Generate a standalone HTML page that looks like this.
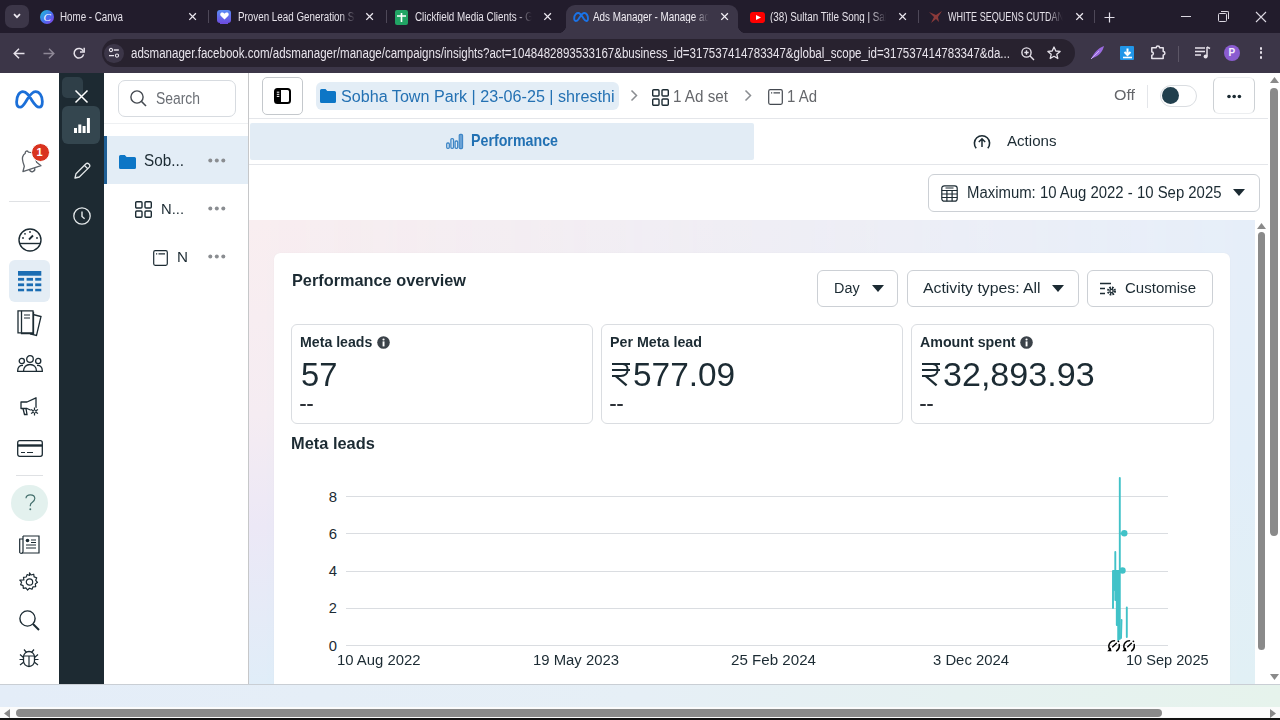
<!DOCTYPE html>
<html><head><meta charset="utf-8">
<style>
*{box-sizing:border-box;margin:0;padding:0}
html,body{width:1280px;height:720px;overflow:hidden;background:#fff;font-family:"Liberation Sans",sans-serif}
.a{position:absolute}
.t{position:absolute;white-space:nowrap;line-height:1;transform-origin:0 0}
.b{font-weight:bold}
svg{position:absolute;overflow:visible}
#tabs{left:0;top:0;width:1280px;height:33px;background:#221c2c}
#tb{left:0;top:33px;width:1280px;height:40px;background:#3c3648}
.tt{color:#e6e2ea;font-size:12px;top:10.8px}
.sep{position:absolute;top:10px;width:1px;height:13px;background:#4e4858}
.fade{-webkit-mask-image:linear-gradient(90deg,#000 86%,transparent 99%)}
</style></head><body>

<!-- ============ TAB STRIP ============ -->
<div id="tabs" class="a">
  <div class="a" style="left:5px;top:5px;width:24px;height:23px;border-radius:7px;background:#3c3648"></div>
  <svg style="left:12px;top:12px" width="10" height="8" viewBox="0 0 10 8"><path d="M2 2.2l3 3 3-3" stroke="#ece8f0" stroke-width="1.7" fill="none"></path></svg>

  <!-- tab1 canva -->
  <div class="a" style="left:40px;top:10px;width:14px;height:14px;border-radius:50%;background:linear-gradient(135deg,#19c6d4 0%,#4a6cf0 55%,#8b3ee6 100%)"></div>
  <div class="t" style="left:43.5px;top:11.5px;font-size:11px;color:#fff;font-style:italic;font-family:'Liberation Serif',serif">C</div>
  <div class="t tt f" style="left: 60px; --w: 63px; transform: scaleX(0.8142);">Home - Canva</div>
  <svg style="left:188.7px;top:13.4px" width="7.2" height="7.2"><path d="M0.3 0.3l6.6 6.6M6.9 0.3l-6.6 6.6" stroke="#ece8f0" stroke-width="1.3"></path></svg>
  <div class="sep" style="left:208px"></div>

  <!-- tab2 -->
  <div class="a" style="left:217px;top:9.5px;width:14px;height:13px;border-radius:3px;background:linear-gradient(180deg,#5a8cf5,#6d4fe0)"></div>
  <svg style="left:219.5px;top:12px" width="9" height="8" viewBox="0 0 10 9"><path d="M5 8.5L1 4.5C-0.5 3 0.3 0.5 2.5 0.5 3.7 0.5 4.5 1.3 5 2 5.5 1.3 6.3 0.5 7.5 0.5 9.7 0.5 10.5 3 9 4.5Z" fill="#fff"></path></svg>
  <div class="a" style="left:220px;top:22px;width:8px;height:2px;background:#6d4fe0"></div>
  <div class="t tt f fade" style="left: 237.5px; --w: 119px; transform: scaleX(0.8182);">Proven Lead Generation St</div>
  <svg style="left:366.2px;top:13.4px" width="7.2" height="7.2"><path d="M0.3 0.3l6.6 6.6M6.9 0.3l-6.6 6.6" stroke="#ece8f0" stroke-width="1.3"></path></svg>
  <div class="sep" style="left:386px"></div>

  <!-- tab3 sheets -->
  <div class="a" style="left:395px;top:9.5px;width:13px;height:15px;border-radius:2px;background:#21a464"></div>
  <div class="a" style="left:398px;top:14px;width:7px;height:7px;border:1.3px solid #fff;border-width:0"></div>
  <svg style="left:397px;top:13px" width="9" height="9"><path d="M0 3h9M4.5 0v9" stroke="#fff" stroke-width="1.6"></path></svg>
  <div class="t tt f fade" style="left: 415px; --w: 118px; transform: scaleX(0.8192);">Clickfield Media Clients - G</div>
  <svg style="left:544.0px;top:13.4px" width="7.2" height="7.2"><path d="M0.3 0.3l6.6 6.6M6.9 0.3l-6.6 6.6" stroke="#ece8f0" stroke-width="1.3"></path></svg>

  <!-- active tab -->
  <div class="a" style="left:566px;top:5px;width:172px;height:29px;border-radius:9px 9px 0 0;background:#3c3648"></div>
  <div class="a" style="left:558px;top:25px;width:8px;height:8px;background:radial-gradient(circle at 0 0,transparent 8px,#3c3648 8.5px)"></div>
  <div class="a" style="left:738px;top:25px;width:8px;height:8px;background:radial-gradient(circle at 100% 0,transparent 8px,#3c3648 8.5px)"></div>
  <svg style="left:573px;top:12px" width="16" height="10" viewBox="0 0 16 10"><path d="M1.2 6.5C1.2 2 4 1 5.2 1 7.5 1 9.5 5 10.5 6.5 11.6 8.2 12.4 9 13.4 9 14.5 9 15 8 15 6.5 15 3.5 13.5 1 11.3 1 9 1 7 5 5.5 7.2 4.5 8.6 3.8 9 2.8 9 1.8 9 1.2 8 1.2 6.5Z" stroke="#1a73e8" stroke-width="1.9" fill="none"></path></svg>
  <div class="t tt f fade" style="left: 593px; --w: 117px; color: rgb(242, 239, 245); transform: scaleX(0.8234);">Ads Manager - Manage ad</div>
  <svg style="left:720.9px;top:13.4px" width="7.2" height="7.2"><path d="M0.3 0.3l6.6 6.6M6.9 0.3l-6.6 6.6" stroke="#f2eff5" stroke-width="1.3"></path></svg>

  <!-- tab5 youtube -->
  <div class="a" style="left:750px;top:11.5px;width:15px;height:11px;border-radius:3px;background:#f00"></div>
  <svg style="left:755.5px;top:14.5px" width="5" height="5"><path d="M0 0L5 2.5 0 5Z" fill="#fff"></path></svg>
  <div class="t tt f fade" style="left: 770px; --w: 117px; transform: scaleX(0.8209);">(38) Sultan Title Song | Sal</div>
  <svg style="left:898.7px;top:13.4px" width="7.2" height="7.2"><path d="M0.3 0.3l6.6 6.6M6.9 0.3l-6.6 6.6" stroke="#ece8f0" stroke-width="1.3"></path></svg>
  <div class="sep" style="left:918px"></div>

  <!-- tab6 -->
  <svg style="left:928px;top:10px" width="15" height="14" viewBox="0 0 15 14"><path d="M1 2L6 7 3 13 8 9 11 12 10 7 14 1 8 5Z" fill="#8c3a3a"></path></svg>
  <div class="t tt f fade" style="left: 948px; --w: 116px; transform: scaleX(0.7532);">WHITE SEQUENS CUTDAN</div>
  <svg style="left:1075.9px;top:13.4px" width="7.2" height="7.2"><path d="M0.3 0.3l6.6 6.6M6.9 0.3l-6.6 6.6" stroke="#ece8f0" stroke-width="1.3"></path></svg>
  <div class="sep" style="left:1094px"></div>
  <svg style="left:1104px;top:12px" width="11" height="11"><path d="M5.5 0.5v10M0.5 5.5h10" stroke="#e2dee8" stroke-width="1.2"></path></svg>

  <!-- window controls -->
  <div class="a" style="left:1180.5px;top:15.5px;width:10px;height:1px;background:#dcd8e2"></div>
  <div class="a" style="left:1218px;top:13px;width:8.5px;height:8.5px;border:1px solid #dcd8e2;border-radius:1.5px"></div>
  <div class="a" style="left:1220.5px;top:10.5px;width:8.5px;height:8.5px;border-top:1px solid #dcd8e2;border-right:1px solid #dcd8e2;border-radius:0 2px 0 0"></div>
  <svg style="left:1256px;top:11.5px" width="10" height="10"><path d="M0 0l10 10M10 0L0 10" stroke="#dcd8e2" stroke-width="1.1"></path></svg>
</div>

<!-- ============ TOOLBAR ============ -->
<div id="tb" class="a">
  <svg style="left:13px;top:14.5px" width="12" height="11" viewBox="0 0 12 11"><path d="M11.5 5.5H1.2M6 0.7L1.2 5.5 6 10.3" stroke="#e6e2ea" stroke-width="1.5" fill="none"></path></svg>
  <svg style="left:43px;top:14.5px" width="12" height="11" viewBox="0 0 12 11"><path d="M0.5 5.5h10.3M6 0.7l4.8 4.8L6 10.3" stroke="#8e8896" stroke-width="1.5" fill="none"></path></svg>
  <svg style="left:73px;top:14px" width="12" height="12" viewBox="0 0 12 12"><path d="M10.3 4.2A4.8 4.8 0 1 0 10.6 7.4" stroke="#e6e2ea" stroke-width="1.5" fill="none"></path><path d="M11.2 0.8v4.2H7" stroke="#e6e2ea" stroke-width="1.5" fill="none"></path></svg>

  <div class="a" style="left:102px;top:6px;width:973px;height:27.5px;border-radius:14px;background:#28222f"></div>
  <div class="a" style="left:104px;top:10.5px;width:20px;height:19.5px;border-radius:50%;background:#3c3648"></div>
  <svg style="left:109px;top:15px" width="10" height="10" viewBox="0 0 10 10"><circle cx="2" cy="2" r="1.6" stroke="#e6e2ea" stroke-width="1.1" fill="none"></circle><path d="M4.8 2h5M0 7.6h5" stroke="#e6e2ea" stroke-width="1.3"></path><circle cx="8" cy="7.6" r="1.6" stroke="#e6e2ea" stroke-width="1.1" fill="none"></circle></svg>
  <div class="t f" style="left: 131.25px; top: 13px; font-size: 14.49px; color: rgb(232, 228, 236); --w: 879px; transform: scaleX(0.7964);">adsmanager.facebook.com/adsmanager/manage/campaigns/insights?act=1048482893533167&amp;business_id=317537414783347&amp;global_scope_id=317537414783347&amp;da...</div>
  <!-- zoom -->
  <svg style="left:1021px;top:14px" width="14" height="14" viewBox="0 0 14 14"><circle cx="5.5" cy="5.5" r="4.6" stroke="#e6e2ea" stroke-width="1.4" fill="none"></circle><path d="M8.8 8.8L13 13M3.3 5.5h4.4M5.5 3.3v4.4" stroke="#e6e2ea" stroke-width="1.4"></path></svg>
  <!-- star -->
  <svg style="left:1047px;top:13px" width="14" height="14" viewBox="0 0 14 14"><path d="M7 1l1.8 4 4.3.4-3.3 2.9 1 4.2L7 10.3 3.2 12.5l1-4.2L.9 5.4l4.3-.4Z" stroke="#e6e2ea" stroke-width="1.3" fill="none" stroke-linejoin="round"></path></svg>
  <!-- feather ext -->
  <svg style="left:1090px;top:12px" width="15" height="15" viewBox="0 0 15 15"><path d="M1 14C4 8 8 3 14 1 13 6 9 11 3 13Z" fill="#9b6be0"></path><path d="M1 14L9 6" stroke="#d9c2ff" stroke-width="0.8"></path></svg>
  <!-- download ext -->
  <div class="a" style="left:1119.8px;top:13px;width:14.2px;height:14px;background:#2196e8;border-radius:1px"></div>
  <svg style="left:1120.6px;top:13.5px" width="13" height="13" viewBox="0 0 13 13"><path d="M6.5 1.5v6M3.5 5l3 3 3-3" stroke="#fff" stroke-width="2" fill="none"></path><path d="M2 10.5h9" stroke="#fff" stroke-width="1.6"></path></svg>
  <!-- puzzle -->
  <svg style="left:1151px;top:12.3px" width="15" height="15" viewBox="0 0 15 15"><path d="M0.8 2.8H5.2A1.7 1.7 0 0 1 8.6 2.8H12.2V6.6A1.7 1.7 0 0 1 12.2 10V13.6H0.8V10.2A1.6 1.6 0 0 0 0.8 7Z" stroke="#e6e2ea" stroke-width="1.5" fill="none" stroke-linejoin="round"></path></svg>
  <div class="a" style="left:1178px;top:13px;width:1px;height:16px;background:#5c5666"></div>
  <!-- media -->
  <svg style="left:1195px;top:13px" width="16" height="14" viewBox="0 0 16 14"><path d="M0 2h10M0 5.5h10M0 9h6" stroke="#e6e2ea" stroke-width="1.5"></path><path d="M12 1v9.5" stroke="#e6e2ea" stroke-width="1.5"></path><circle cx="10.6" cy="10.6" r="2" fill="#e6e2ea"></circle><path d="M12 1l3 1.5" stroke="#e6e2ea" stroke-width="1.5"></path></svg>
  <!-- profile -->
  <div class="a" style="left:1223.8px;top:11.6px;width:16.5px;height:16.5px;border-radius:50%;background:#8a5cd0"></div>
  <div class="t b" style="left:1228.4px;top:15.2px;font-size:10px;color:#f4eefc">P</div>
  <!-- kebab -->
  <div class="a" style="left:1259.6px;top:13.9px;width:2.8px;height:2.8px;border-radius:50%;background:#e6e2ea"></div>
  <div class="a" style="left:1259.6px;top:18.4px;width:2.8px;height:2.8px;border-radius:50%;background:#e6e2ea"></div>
  <div class="a" style="left:1259.6px;top:22.8px;width:2.8px;height:2.8px;border-radius:50%;background:#e6e2ea"></div>
</div>

<!-- ============ PAGE ============ -->
<div class="a" style="left:0;top:73px;width:1280px;height:611px;background:#fff"></div>

<!-- left nav -->
<svg style="left:0;top:0" width="60" height="120" viewBox="0 0 60 120"><path d="M16.6 101.9C16.6 96 19.5 91.65 22.9 91.65 26.5 91.65 29 95.5 32 100.5 34.5 104.5 36.5 107.2 39.2 107.2 41.2 107.2 42.35 105 42.35 101.5 42.35 96 39.5 91.65 35.4 91.65 32 91.65 29.5 95.5 26.5 100.5 24 104.5 22.5 107.2 20.4 107.2 18 107.2 16.6 105 16.6 101.9Z" stroke="#1b6fd8" stroke-width="2.8" fill="none"></path></svg>
<!-- bell -->
<svg style="left:18px;top:149px;transform:rotate(-18deg);transform-origin:12px 14px" width="24" height="26" viewBox="0 0 24 26"><path d="M10.6 3.2a1.6 1.6 0 0 1 3.2 0C17.3 4.3 18.6 7.5 18.6 11v4.3l3 4.7H2.6l3-4.7V11C5.6 7.5 7 4.3 10.6 3.2Z" stroke="#5b6168" stroke-width="1.3" fill="#fff" stroke-linejoin="round"></path><path d="M9.4 20.3a2.7 2.7 0 0 0 5.4 0" stroke="#5b6168" stroke-width="1.3" fill="none"></path></svg>
<div class="a" style="left:30.5px;top:142.5px;width:19px;height:19px;border-radius:50%;background:#d9331f;border:1.5px solid #fff"></div>
<div class="t b" style="left:36.5px;top:146.5px;font-size:11px;color:#fff">1</div>
<div class="a" style="left:9px;top:201px;width:41px;height:1px;background:#dfe1e4"></div>
<!-- gauge -->
<svg style="left:18px;top:227.5px" width="24" height="24" viewBox="0 0 24 24"><circle cx="12" cy="12" r="11" stroke="#1c2b33" stroke-width="1.4" fill="none"></circle><path d="M1.5 15.5h21" stroke="#1c2b33" stroke-width="1.4"></path><path d="M11 11.5l4-4" stroke="#1c2b33" stroke-width="1.8"></path><circle cx="5" cy="10" r=".9" fill="#1c2b33"></circle><circle cx="7" cy="5.8" r=".9" fill="#1c2b33"></circle><circle cx="12" cy="4" r=".9" fill="#1c2b33"></circle><circle cx="19" cy="10" r=".9" fill="#1c2b33"></circle></svg>
<!-- table selected -->
<div class="a" style="left:9px;top:260px;width:41px;height:42px;border-radius:6px;background:#e4edf5"></div>
<svg style="left:17.8px;top:270.9px" width="24" height="21" viewBox="0 0 24 21"><rect x="0" y="0" width="23.3" height="4.7" fill="#1b6db3"></rect><g fill="#1b6db3"><rect x="0" y="6.9" width="6.1" height="2.8"></rect><rect x="8.6" y="6.9" width="6.4" height="2.8"></rect><rect x="17.2" y="6.9" width="6.1" height="2.8"></rect><rect x="0" y="12.4" width="6.1" height="2.8"></rect><rect x="8.6" y="12.4" width="6.4" height="2.8"></rect><rect x="17.2" y="12.4" width="6.1" height="2.8"></rect><rect x="0" y="17.8" width="6.1" height="2.5"></rect><rect x="8.6" y="17.8" width="6.4" height="2.5"></rect><rect x="17.2" y="17.8" width="6.1" height="2.5"></rect></g></svg>
<!-- pages -->
<svg style="left:16.5px;top:309.5px" width="26" height="27" viewBox="0 0 26 27"><path d="M4.5 2.5h12v21h-12Z" stroke="#1c2b33" stroke-width="1.3" fill="#fff"></path><path d="M1 .8h15v22H1Z" stroke="#1c2b33" stroke-width="1.3" fill="#fff"></path><path d="M4.5 .8V22.8" stroke="#1c2b33" stroke-width="1.3"></path><path d="M7 5h6M7 8h6" stroke="#1c2b33" stroke-width="1.2"></path><path d="M16 4.5l8 2-4.5 19-6.5-1.7" stroke="#1c2b33" stroke-width="1.3" fill="none"></path></svg>
<!-- audience -->
<svg style="left:16.5px;top:355px" width="26" height="17" viewBox="0 0 26 17"><circle cx="13" cy="4" r="3.3" stroke="#1c2b33" stroke-width="1.3" fill="none"></circle><circle cx="4.8" cy="6" r="2.6" stroke="#1c2b33" stroke-width="1.3" fill="none"></circle><circle cx="21.2" cy="6" r="2.6" stroke="#1c2b33" stroke-width="1.3" fill="none"></circle><path d="M6.5 16.3c0-4.3 2.8-6.8 6.5-6.8s6.5 2.5 6.5 6.8Z" stroke="#1c2b33" stroke-width="1.3" fill="none"></path><path d="M6 10.5C3 10.2.7 12 .7 15.5v.8h5.5M20 10.5c3-.3 5.3 1.5 5.3 5v.8h-5.5" stroke="#1c2b33" stroke-width="1.3" fill="none"></path></svg>
<!-- megaphone -->
<svg style="left:19.5px;top:396.5px" width="20" height="19" viewBox="0 0 20 19"><path d="M1 5h6l9-4.2V15.5L7 11.5H1Z" stroke="#1c2b33" stroke-width="1.3" fill="#fff" stroke-linejoin="round"></path><path d="M3 11.5l1.5 6h2.5L6 11.5" stroke="#1c2b33" stroke-width="1.3" fill="none"></path><circle cx="14.5" cy="14.5" r="4" fill="#fff"></circle><path d="M14.5 10.5v8M11 12.5l7 4M11 16.5l7-4" stroke="#1c2b33" stroke-width="1.2"></path><circle cx="14.5" cy="14.5" r="1.5" fill="#fff" stroke="#1c2b33" stroke-width="1"></circle></svg>
<!-- card -->
<svg style="left:16.5px;top:439.5px" width="26" height="17" viewBox="0 0 26 17"><rect x=".7" y=".7" width="24.6" height="15.6" rx="2" stroke="#1c2b33" stroke-width="1.3" fill="none"></rect><path d="M.7 5.5h24.6" stroke="#1c2b33" stroke-width="2.4"></path><path d="M4 12.5h4M10 12.5h6" stroke="#1c2b33" stroke-width="1.2"></path></svg>
<div class="a" style="left:16px;top:474.5px;width:27px;height:1px;background:#dfe1e4"></div>
<!-- help -->
<div class="a" style="left:11.3px;top:484.5px;width:36.5px;height:36.5px;border-radius:50%;background:#e3f1ee"></div>
<svg style="left:25px;top:494px" width="11" height="17" viewBox="0 0 11 17"><path d="M1 4.2C1 2.1 2.8.8 5.2.8 7.8.8 9.8 2.3 9.8 4.6 9.8 6.6 8.3 7.5 7 8.5 5.9 9.3 5.3 10 5.3 11.5V12.3" stroke="#45706d" stroke-width="1.2" fill="none"></path><circle cx="5.3" cy="15.3" r=".95" fill="#45706d"></circle></svg>
<!-- news -->
<svg style="left:19px;top:535px" width="21" height="19" viewBox="0 0 21 19"><path d="M4 1h16v17H3" stroke="#1c2b33" stroke-width="1.2" fill="none"></path><path d="M4 1v15.5a1.8 1.8 0 0 1-3.3 1V4h3.3" stroke="#1c2b33" stroke-width="1.2" fill="none"></path><circle cx="8.5" cy="5.5" r="1.8" fill="#1c2b33"></circle><path d="M7 10h10M7 13h10M12 5h5M12 7.5h5" stroke="#1c2b33" stroke-width="1.1"></path></svg>
<!-- gear -->
<svg style="left:19px;top:572px" width="21" height="20" viewBox="0 0 21 20"><path d="M10.5 .8l1.6 2.2 2.6-.8.4 2.7 2.6.9-1 2.5 1.8 2-2.2 1.6.4 2.7-2.7.2-1 2.5-2.5-1.1-2 1.8-1.6-2.2-2.6.5-.2-2.7-2.5-1 1-2.5-1.8-2L4.9 8 4.5 5.3l2.7-.3 1-2.5 2.4 1Z" stroke="#1c2b33" stroke-width="1.2" fill="none" stroke-linejoin="round"></path><circle cx="10.5" cy="10" r="3.2" stroke="#1c2b33" stroke-width="1.2" fill="none"></circle></svg>
<!-- search -->
<svg style="left:19px;top:610px" width="21" height="21" viewBox="0 0 21 21"><circle cx="8.5" cy="8.5" r="7.6" stroke="#1c2b33" stroke-width="1.4" fill="none"></circle><path d="M14 14l6 6" stroke="#1c2b33" stroke-width="2"></path></svg>
<!-- bug -->
<svg style="left:19px;top:648px" width="20" height="19" viewBox="0 0 20 19"><path d="M5 1.5l2.5 3M15 1.5l-2.5 3" stroke="#1c2b33" stroke-width="1.2"></path><path d="M4.5 9a5.5 5.5 0 0 1 11 0v4a5.5 5.5 0 0 1-11 0Z" stroke="#1c2b33" stroke-width="1.3" fill="none"></path><path d="M5 8h10M10 8v10.3M1 6.5l3.5 3M19 6.5l-3.5 3M1 17l3.5-2.8M19 17l-3.5-2.8M.5 11.5h4M19.5 11.5h-4" stroke="#1c2b33" stroke-width="1.2"></path></svg>

<!-- dark panel -->
<div class="a" style="left:59px;top:73px;width:45px;height:611px;background:#1d2a32"></div>
<div class="a" style="left:62px;top:77px;width:21px;height:21px;border-radius:5px;background:#2f3f48"></div>
<svg style="left:75px;top:89.5px" width="13" height="13"><path d="M.5 .5l12 12M12.5 .5l-12 12" stroke="#fff" stroke-width="1.5"></path></svg>
<div class="a" style="left:62px;top:106px;width:38px;height:37.5px;border-radius:6px;background:#34464f"></div>
<svg style="left:74px;top:117.5px" width="16" height="15" viewBox="0 0 16 15"><rect x="0" y="10" width="3" height="5" fill="#fff"></rect><rect x="4.3" y="6.5" width="3" height="8.5" fill="#fff"></rect><rect x="8.6" y="8" width="3" height="7" fill="#fff"></rect><rect x="12.9" y="0" width="3" height="15" fill="#fff"></rect></svg>
<svg style="left:73.5px;top:162.5px" width="17" height="16" viewBox="0 0 17 16"><path d="M1 15l1-4.3L12 .8a1.8 1.8 0 0 1 2.6 0l.7.7a1.8 1.8 0 0 1 0 2.6L5.3 14Z" stroke="#e4e8ea" stroke-width="1.3" fill="none" stroke-linejoin="round"></path><path d="M10.5 2.5l3.5 3.5" stroke="#e4e8ea" stroke-width="1.3"></path></svg>
<svg style="left:72.5px;top:207px" width="18" height="18" viewBox="0 0 18 18"><circle cx="9" cy="9" r="8.2" stroke="#e4e8ea" stroke-width="1.3" fill="none"></circle><path d="M9 4.5V9.5l2.6 2.2" stroke="#e4e8ea" stroke-width="1.4" fill="none"></path></svg>

<!-- tree panel -->
<div class="a" style="left:248px;top:73px;width:1px;height:611px;background:#c6c7c9"></div>
<div class="a" style="left:117.5px;top:79.5px;width:118.5px;height:37px;border:1px solid #d7dbe0;border-radius:7px"></div>
<svg style="left:129.5px;top:89.5px" width="17" height="17" viewBox="0 0 17 17"><circle cx="7" cy="7" r="6.1" stroke="#444950" stroke-width="1.4" fill="none"></circle><path d="M11.3 11.3L16 16" stroke="#444950" stroke-width="1.6"></path></svg>
<div class="t f" style="left: 155.5px; top: 90px; font-size: 17.1px; color: rgb(106, 110, 116); --w: 44px; transform: scaleX(0.8122);">Search</div>
<div class="a" style="left:104px;top:122.5px;width:144px;height:1px;background:#eef0f2"></div>
<div class="a" style="left:104px;top:136px;width:144px;height:48px;background:#e3edf6"></div>
<div class="a" style="left:104px;top:136px;width:2.5px;height:48px;background:#1f5f95"></div>
<svg style="left:119px;top:155px" width="17" height="14" viewBox="0 0 17 14"><path d="M0 1.5A1.5 1.5 0 0 1 1.5 0h4.3l1.8 2h7.9A1.5 1.5 0 0 1 17 3.5v9A1.5 1.5 0 0 1 15.5 14h-14A1.5 1.5 0 0 1 0 12.5Z" fill="#0d76c6"></path></svg>
<div class="t f" style="left: 144px; top: 153px; font-size: 15.8px; color: rgb(28, 43, 51); --w: 40px; transform: scaleX(0.969);">Sob...</div>
<svg style="left:207.5px;top:157.5px" width="18" height="5"><circle cx="2.3" cy="2.5" r="2" fill="#8a8d91"></circle><circle cx="8.8" cy="2.5" r="2" fill="#8a8d91"></circle><circle cx="15.3" cy="2.5" r="2" fill="#8a8d91"></circle></svg>
<svg style="left:135px;top:201px" width="17" height="17" viewBox="0 0 17 17"><g stroke="#1c2b33" stroke-width="1.4" fill="none"><rect x=".7" y=".7" width="6.3" height="6.3" rx="1"></rect><rect x="10" y=".7" width="6.3" height="6.3" rx="1"></rect><rect x=".7" y="10" width="6.3" height="6.3" rx="1"></rect><rect x="10" y="10" width="6.3" height="6.3" rx="1"></rect></g></svg>
<div class="t f" style="left: 161px; top: 201px; font-size: 15.51px; color: rgb(28, 43, 51); --w: 23px; transform: scaleX(0.9534);">N...</div>
<svg style="left:207.5px;top:205.5px" width="18" height="5"><circle cx="2.3" cy="2.5" r="2" fill="#8a8d91"></circle><circle cx="8.8" cy="2.5" r="2" fill="#8a8d91"></circle><circle cx="15.3" cy="2.5" r="2" fill="#8a8d91"></circle></svg>
<svg style="left:153px;top:250px" width="15" height="16" viewBox="0 0 15 16"><rect x=".7" y=".7" width="13.6" height="14.6" rx="1.5" stroke="#1c2b33" stroke-width="1.2" fill="none"></rect><path d="M3 3.8h1.2M5.5 3.8h6.5" stroke="#1c2b33" stroke-width="1.3"></path></svg>
<div class="t f" style="left: 177px; top: 250px; font-size: 14.78px; color: rgb(28, 43, 51); --w: 11px; transform: scaleX(1.0307);">N</div>
<svg style="left:207.5px;top:253.5px" width="18" height="5"><circle cx="2.3" cy="2.5" r="2" fill="#8a8d91"></circle><circle cx="8.8" cy="2.5" r="2" fill="#8a8d91"></circle><circle cx="15.3" cy="2.5" r="2" fill="#8a8d91"></circle></svg>

<!-- main header -->
<div class="a" style="left:261.5px;top:77.3px;width:41.5px;height:37.3px;border:1px solid #c4c8cc;border-radius:5px"></div>
<svg style="left:274px;top:88px" width="17" height="16" viewBox="0 0 17 16"><rect x="1" y="1" width="15" height="14" rx="2.5" stroke="#000" stroke-width="2" fill="none"></rect><path d="M1 3.5a2.5 2.5 0 0 1 2.5-2.5H7V15H3.5A2.5 2.5 0 0 1 1 12.5Z" fill="#000"></path><path d="M2.8 4.2h2.5M2.8 6.3h2.5M2.8 8.4h2.5" stroke="#fff" stroke-width="1"></path></svg>
<div class="a" style="left:315.5px;top:82px;width:303px;height:28px;border-radius:6px;background:#e3edf6"></div>
<svg style="left:320px;top:89px" width="16" height="14" viewBox="0 0 16 14"><path d="M0 1.5A1.5 1.5 0 0 1 1.5 0h4l1.8 2H14.5A1.5 1.5 0 0 1 16 3.5v9A1.5 1.5 0 0 1 14.5 14h-13A1.5 1.5 0 0 1 0 12.5Z" fill="#0d76c6"></path></svg>
<div class="t f" style="left: 341px; top: 88px; font-size: 17.03px; color: rgb(36, 113, 179); --w: 273.5px; transform: scaleX(0.948);">Sobha Town Park | 23-06-25 | shresthi</div>
<svg style="left:630px;top:89px" width="8" height="13"><path d="M1.5 1.5l5 5-5 5" stroke="#8a8d91" stroke-width="1.5" fill="none"></path></svg>
<svg style="left:652px;top:88.5px" width="17" height="17" viewBox="0 0 17 17"><g stroke="#1c2b33" stroke-width="1.4" fill="none"><rect x=".7" y=".7" width="6.3" height="6.3" rx="1"></rect><rect x="10" y=".7" width="6.3" height="6.3" rx="1"></rect><rect x=".7" y="10" width="6.3" height="6.3" rx="1"></rect><rect x="10" y="10" width="6.3" height="6.3" rx="1"></rect></g></svg>
<div class="t f" style="left: 673px; top: 89px; font-size: 15.65px; color: rgb(101, 103, 107); --w: 55px; transform: scaleX(0.9729);">1 Ad set</div>
<svg style="left:744px;top:89px" width="8" height="13"><path d="M1.5 1.5l5 5-5 5" stroke="#8a8d91" stroke-width="1.5" fill="none"></path></svg>
<svg style="left:767.5px;top:88.5px" width="15" height="16" viewBox="0 0 15 16"><rect x=".7" y=".7" width="13.6" height="14.6" rx="1.5" stroke="#444950" stroke-width="1.2" fill="none"></rect><path d="M3 3.8h1.2M5.5 3.8h6.5" stroke="#444950" stroke-width="1.3"></path></svg>
<div class="t f" style="left: 787px; top: 89px; font-size: 15.65px; color: rgb(101, 103, 107); --w: 30px; transform: scaleX(0.9581);">1 Ad</div>
<div class="t f" style="left: 1113.7px; top: 87px; font-size: 15.36px; color: rgb(101, 103, 107); --w: 21px; transform: scaleX(1.0386);">Off</div>
<div class="a" style="left:1147px;top:84.5px;width:1px;height:23px;background:#e4e6ea"></div>
<div class="a" style="left:1159.5px;top:85.3px;width:37.5px;height:21.5px;border-radius:11px;border:1px solid #dadde1;background:#fff"></div>
<div class="a" style="left:1161.8px;top:87.3px;width:17.2px;height:17.2px;border-radius:50%;background:#213f4d"></div>
<div class="a" style="left:1213px;top:77px;width:42px;height:37px;border:1px solid #eceef0;border-left-color:#cdd1d5;border-right-color:#cdd1d5;border-radius:6px"></div>
<svg style="left:1227px;top:93.5px" width="16" height="5"><circle cx="2" cy="2.5" r="1.8" fill="#1c2b33"></circle><circle cx="7.2" cy="2.5" r="1.8" fill="#1c2b33"></circle><circle cx="12.4" cy="2.5" r="1.8" fill="#1c2b33"></circle></svg>
<div class="a" style="left:249px;top:118px;width:1019px;height:1px;background:#e4e6ea"></div>

<!-- tabs row -->
<div class="a" style="left:250px;top:123px;width:504px;height:37px;border-radius:2px;background:#e2ecf5"></div>
<svg style="left:445.5px;top:133.5px" width="17" height="15" viewBox="0 0 17 15"><g fill="none" stroke="#3e86c6" stroke-width="1.3"><rect x=".7" y="9" width="2.6" height="5.3" rx="1"></rect><rect x="4.9" y="4.6" width="2.6" height="9.7" rx="1"></rect><rect x="9.1" y="7" width="2.6" height="7.3" rx="1"></rect></g><rect x="13.2" y=".4" width="3.4" height="14.2" rx="1.2" fill="#6aa2d6" stroke="#3e86c6" stroke-width="1.1"></rect></svg>
<div class="t b f" style="left: 470.6px; top: 133px; font-size: 15.58px; color: rgb(34, 113, 179); --w: 87px; transform: scaleX(0.9134);">Performance</div>
<svg style="left:972.5px;top:133.5px" width="18" height="16" viewBox="0 0 18 16"><path d="M3.2 14.2A7.6 7.6 0 1 1 14.8 14.2" stroke="#1c2b33" stroke-width="1.6" fill="none"></path><path d="M9 13V4.8M5.8 8l3.2-3.2L12.2 8" stroke="#1c2b33" stroke-width="1.5" fill="none"></path></svg>
<div class="t f" style="left: 1007px; top: 134px; font-size: 14.86px; color: rgb(28, 43, 51); --w: 49.5px; transform: scaleX(1.0157);">Actions</div>
<div class="a" style="left:249px;top:164px;width:1019px;height:1px;background:#e4e6ea"></div>

<!-- date button -->
<div class="a" style="left:928px;top:173.5px;width:332px;height:38px;border:1px solid #ccd0d5;border-radius:6px"></div>
<svg style="left:941px;top:184.5px" width="17" height="17" viewBox="0 0 17 17"><g stroke="#1c2b33" stroke-width="1.2" fill="none"><rect x=".8" y=".8" width="15.4" height="15.4" rx="2.5"></rect><path d="M.8 5.5h15.4M.8 9h15.4M.8 12.5h15.4M5.9 5.5v10.7M11.1 5.5v10.7M4.5 3h8"></path></g></svg>
<div class="t f" style="left: 966.5px; top: 185px; font-size: 15.8px; color: rgb(28, 43, 51); --w: 254.5px; transform: scaleX(0.944);">Maximum: 10 Aug 2022 - 10 Sep 2025</div>
<svg style="left:1232.5px;top:189px" width="12" height="7"><path d="M0 0h12L6 7Z" fill="#1c2b33"></path></svg>

<!-- gradient bg -->
<div class="a" style="left:249px;top:220px;width:1006px;height:464px;background:linear-gradient(180deg,#f9eef0 0%,#f5ecf2 42%,#ece8f6 66%,#e0edf8 100%)"></div>
<div class="a" style="left:249px;top:220px;width:1006px;height:464px;background:linear-gradient(180deg,#e6eef9 0%,#e2eef9 50%,#e1f0f5 100%);-webkit-mask-image:linear-gradient(90deg,transparent 0%,#000 100%)"></div>
<div class="a" style="left:1255px;top:220px;width:13px;height:464px;background:#fff"></div>

<!-- card -->
<div class="a" style="left:274px;top:253px;width:956px;height:440px;border-radius:6px;background:#fff;box-shadow:0 0 1px rgba(0,0,0,.08)"></div>
<div class="t b f" style="left: 291.5px; top: 273px; font-size: 16.96px; color: rgb(28, 43, 51); --w: 174px; transform: scaleX(0.9626);">Performance overview</div>

<div class="a" style="left:817px;top:269.5px;width:81px;height:37px;border:1px solid #ccd0d5;border-radius:6px"></div>
<div class="t f" style="left: 834.4px; top: 280px; font-size: 15.51px; color: rgb(28, 43, 51); --w: 25.6px; transform: scaleX(0.9283);">Day</div>
<svg style="left:871.5px;top:284.5px" width="12" height="7"><path d="M0 0h12L6 7Z" fill="#1c2b33"></path></svg>
<div class="a" style="left:906.5px;top:269.5px;width:172px;height:37px;border:1px solid #ccd0d5;border-radius:6px"></div>
<div class="t f" style="left: 923px; top: 280px; font-size: 15.51px; color: rgb(28, 43, 51); --w: 117.6px; transform: scaleX(1.0187);">Activity types: All</div>
<svg style="left:1052px;top:284.5px" width="12" height="7"><path d="M0 0h12L6 7Z" fill="#1c2b33"></path></svg>
<div class="a" style="left:1087.4px;top:269.5px;width:126px;height:37px;border:1px solid #ccd0d5;border-radius:6px"></div>
<svg style="left:1099.5px;top:281.5px" width="17" height="14" viewBox="0 0 17 14"><path d="M0 1.5h11M0 6.5h5M0 11.5h5" stroke="#1c2b33" stroke-width="1.3"></path><circle cx="11.5" cy="9" r="3.3" fill="none" stroke="#1c2b33" stroke-width="2.4" stroke-dasharray="1.6 1"></circle><circle cx="11.5" cy="9" r="2.2" fill="#1c2b33"></circle><circle cx="11.5" cy="9" r="1" fill="#fff"></circle></svg>
<div class="t f" style="left: 1124.9px; top: 280px; font-size: 15.51px; color: rgb(28, 43, 51); --w: 71px; transform: scaleX(0.9697);">Customise</div>

<!-- metric cards -->
<div class="a" style="left:291px;top:323.5px;width:302px;height:100px;border:1px solid #dadde1;border-radius:6px"></div>
<div class="a" style="left:601px;top:323.5px;width:302px;height:100px;border:1px solid #dadde1;border-radius:6px"></div>
<div class="a" style="left:911px;top:323.5px;width:303px;height:100px;border:1px solid #dadde1;border-radius:6px"></div>
<div class="t b f" style="left: 300px; top: 334px; font-size: 15.36px; color: rgb(28, 43, 51); --w: 72.4px; transform: scaleX(0.9217);">Meta leads</div>
<svg style="left:376.5px;top:336px" width="13" height="13" viewBox="0 0 13 13"><circle cx="6.5" cy="6.5" r="6.3" fill="#3b4249"></circle><rect x="5.6" y="5.4" width="1.9" height="5" fill="#fff"></rect><circle cx="6.55" cy="3.5" r="1.1" fill="#fff"></circle></svg>
<div class="t f" style="left: 300.7px; top: 358px; font-size: 33.91px; color: rgb(28, 43, 51); --w: 36.4px; transform: scaleX(0.965);">57</div>
<div class="a" style="left:299.8px;top:403.9px;width:5.8px;height:1.7px;border-radius:1px;background:#2d3238"></div>
<div class="a" style="left:307px;top:403.9px;width:6px;height:1.7px;border-radius:1px;background:#2d3238"></div>

<div class="t b f" style="left: 610px; top: 334px; font-size: 15.36px; color: rgb(28, 43, 51); --w: 92px; transform: scaleX(0.929);">Per Meta lead</div>
<svg style="left:611.9px;top:363px" width="18" height="23" viewBox="0 0 18 23"><g stroke="#1c2b33" fill="none"><path d="M0 1.1H18M0 7H18" stroke-width="2"></path><path d="M10.8 1.1C14.3 1.3 15.6 4 15.6 7 15.6 10.4 13 12.9 8.8 12.9H0" stroke-width="2"></path><path d="M3.6 13L14.6 22.4" stroke-width="2.3"></path></g></svg>
<div class="t f" style="left: 633.4px; top: 358px; font-size: 33.91px; color: rgb(28, 43, 51); --w: 102.1px; transform: scaleX(0.9844);">577.09</div>
<div class="a" style="left:609.8px;top:403.9px;width:5.8px;height:1.7px;border-radius:1px;background:#2d3238"></div>
<div class="a" style="left:617px;top:403.9px;width:6px;height:1.7px;border-radius:1px;background:#2d3238"></div>

<div class="t b f" style="left: 920px; top: 334px; font-size: 15.36px; color: rgb(28, 43, 51); --w: 95.6px; transform: scaleX(0.9259);">Amount spent</div>
<svg style="left:1019.8px;top:336px" width="13" height="13" viewBox="0 0 13 13"><circle cx="6.5" cy="6.5" r="6.3" fill="#3b4249"></circle><rect x="5.6" y="5.4" width="1.9" height="5" fill="#fff"></rect><circle cx="6.55" cy="3.5" r="1.1" fill="#fff"></circle></svg>
<svg style="left:921.9px;top:363px" width="18" height="23" viewBox="0 0 18 23"><g stroke="#1c2b33" fill="none"><path d="M0 1.1H18M0 7H18" stroke-width="2"></path><path d="M10.8 1.1C14.3 1.3 15.6 4 15.6 7 15.6 10.4 13 12.9 8.8 12.9H0" stroke-width="2"></path><path d="M3.6 13L14.6 22.4" stroke-width="2.3"></path></g></svg>
<div class="t f" style="left: 943.4px; top: 358px; font-size: 33.91px; color: rgb(28, 43, 51); --w: 151.6px; transform: scaleX(1.005);">32,893.93</div>
<div class="a" style="left:919.8px;top:403.9px;width:5.8px;height:1.7px;border-radius:1px;background:#2d3238"></div>
<div class="a" style="left:927px;top:403.9px;width:6px;height:1.7px;border-radius:1px;background:#2d3238"></div>

<!-- chart -->
<div class="t b f" style="left: 291.2px; top: 436px; font-size: 16.67px; color: rgb(28, 43, 51); --w: 83.8px; transform: scaleX(0.9839);">Meta leads</div>
<div class="a" style="left:346px;top:496px;width:821.5px;height:1px;background:#dadde1"></div>
<div class="a" style="left:346px;top:533px;width:821.5px;height:1px;background:#dadde1"></div>
<div class="a" style="left:346px;top:570.5px;width:821.5px;height:1px;background:#dadde1"></div>
<div class="a" style="left:346px;top:608px;width:821.5px;height:1px;background:#dadde1"></div>
<div class="a" style="left:346px;top:645px;width:821.5px;height:1px;background:#dadde1"></div>
<div class="t" style="left:328.7px;top:490px;font-size:14.93px;color:#1c2b33">8</div>
<div class="t" style="left:328.7px;top:527px;font-size:14.93px;color:#1c2b33">6</div>
<div class="t" style="left:328.7px;top:564px;font-size:14.93px;color:#1c2b33">4</div>
<div class="t" style="left:328.7px;top:601px;font-size:14.64px;color:#1c2b33">2</div>
<div class="t" style="left:328.7px;top:639px;font-size:14.78px;color:#1c2b33">0</div>
<div class="t f" style="left: 337px; top: 652px; font-size: 15.07px; color: rgb(28, 43, 51); --w: 83.6px; transform: scaleX(0.9881);">10 Aug 2022</div>
<div class="t f" style="left: 533px; top: 652px; font-size: 15.07px; color: rgb(28, 43, 51); --w: 86px; transform: scaleX(0.9874);">19 May 2023</div>
<div class="t f" style="left: 731px; top: 652px; font-size: 15.07px; color: rgb(28, 43, 51); --w: 85px; transform: scaleX(1.0048);">25 Feb 2024</div>
<div class="t f" style="left: 933px; top: 652px; font-size: 15.07px; color: rgb(28, 43, 51); --w: 76px; transform: scaleX(0.9864);">3 Dec 2024</div>
<div class="t f" style="left: 1125.6px; top: 652px; font-size: 15.07px; color: rgb(28, 43, 51); --w: 82.7px; transform: scaleX(0.968);">10 Sep 2025</div>
<svg style="left:1100px;top:470px" width="40" height="190" viewBox="1100 470 40 190"><g stroke="#41c2c8" stroke-width="1.9" fill="none" stroke-linejoin="round" stroke-linecap="round"><path d="M1119.8 478V639"></path><path d="M1113 608V571H1122.5"></path><path d="M1115.3 600V552M1116.8 571V625M1118.2 571V640"></path><path d="M1114.2 590V571"></path><path d="M1121 638L1121.5 620M1126.8 637V607.5"></path><path d="M1124.3 533.5H1121"></path></g><path d="M1116 571H1119V612H1116Z" fill="#41c2c8"></path><circle cx="1124.3" cy="533.3" r="3.2" fill="#41c2c8"></circle><circle cx="1122.5" cy="570.5" r="3.2" fill="#41c2c8"></circle></svg>
<svg style="left:1106.6px;top:640.2px" width="28" height="12" viewBox="0 0 28 12"><g stroke="#000" stroke-width="1.5" fill="none" stroke-linecap="round"><path d="M7.5 0.8C4 0.8 1.8 3.5 1.8 6.3 1.8 7.4 2.2 8.4 2.8 9.2"></path><path d="M5.7 6.7L9.4 3.3"></path><path d="M12.2 4.5C12.6 7.3 11.6 9.6 9.6 10.9"></path><path d="M22.5 0.8C19 0.8 16.8 3.5 16.8 6.3 16.8 7.4 17.2 8.4 17.8 9.2"></path><path d="M20.7 6.7L24.4 3.3"></path><path d="M27.2 4.5C27.6 7.3 26.6 9.6 24.6 10.9"></path></g><path d="M0.2 11.2L4.6 11.2 3.6 7.4Z M15.2 11.2L19.6 11.2 18.6 7.4Z" fill="#000"></path><circle cx="11.4" cy="1.3" r=".9" fill="#000"></circle><circle cx="26.4" cy="1.3" r=".9" fill="#000"></circle></svg>

<!-- scrollbars -->
<svg style="left:1257px;top:222.5px" width="9" height="6"><path d="M0 6L4.5 0 9 6Z" fill="#8a8a8a"></path></svg>
<div class="a" style="left:1257.8px;top:232px;width:7.5px;height:417.5px;border-radius:4px;background:#8a8a8a"></div>
<svg style="left:1269.5px;top:76.5px" width="9" height="6"><path d="M0 6L4.5 0 9 6Z" fill="#8a8a8a"></path></svg>
<div class="a" style="left:1270px;top:87.5px;width:7.5px;height:448px;border-radius:4px;background:#8a8a8a"></div>
<svg style="left:1269.5px;top:674px" width="9" height="6"><path d="M0 0L4.5 6 9 0Z" fill="#8a8a8a"></path></svg>

<!-- bottom band -->
<div class="a" style="left:0;top:684px;width:1280px;height:1px;background:#c9ced4"></div>
<div class="a" style="left:0;top:685px;width:1280px;height:22px;background:linear-gradient(90deg,#e4edf8 0%,#e6eff6 50%,#e6f3ec 100%)"></div>
<div class="a" style="left:0;top:707px;width:1280px;height:11px;background:#fbfbfb"></div>
<svg style="left:4px;top:708.5px" width="6" height="9"><path d="M6 0L0 4.5 6 9Z" fill="#8a8a8a"></path></svg>
<div class="a" style="left:16px;top:709px;width:1146px;height:7.5px;border-radius:4px;background:#8a8a8a"></div>
<svg style="left:1270px;top:708.5px" width="6" height="9"><path d="M0 0L6 4.5 0 9Z" fill="#8a8a8a"></path></svg>
<div class="a" style="left:0;top:718px;width:1280px;height:2px;background:#111"></div>



</body></html>
